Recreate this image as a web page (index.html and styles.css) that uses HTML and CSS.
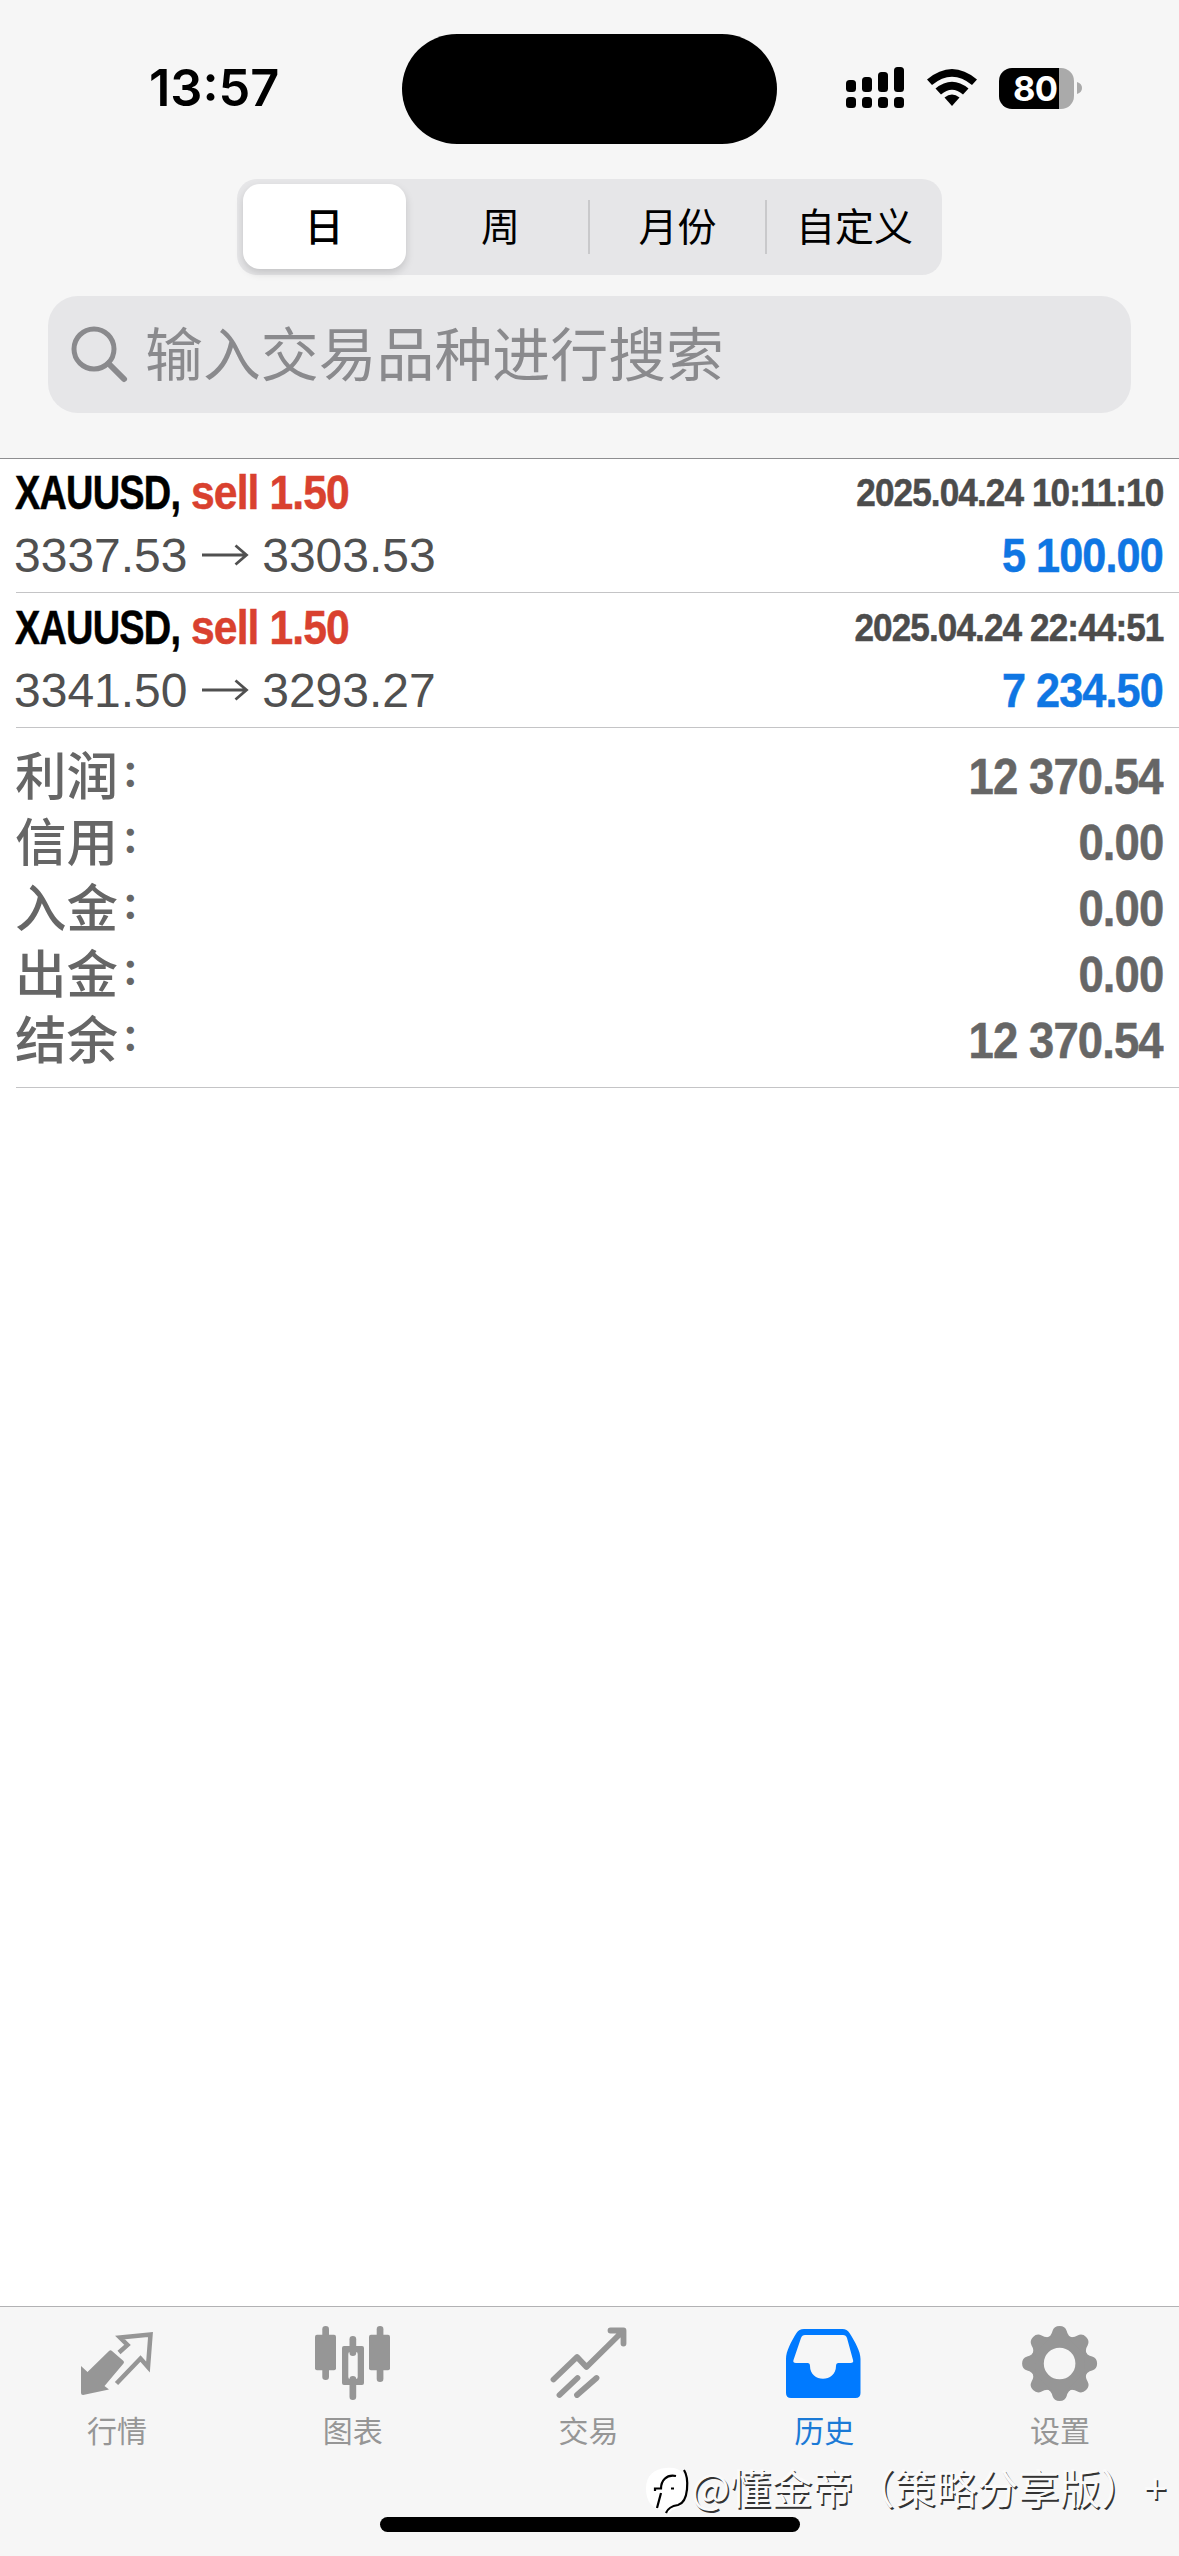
FILE: index.html
```html
<!DOCTYPE html>
<html lang="zh-CN">
<head>
<meta charset="utf-8">
<title>历史</title>
<link rel="stylesheet" href="styles.css">
</head>
<body>
<div class="screen">
  <header class="header">
    <div class="status">
      <div class="time">13:57</div>
      <div class="island"></div>
      <div class="indicators">
        <svg class="signal" width="58" height="42" viewBox="0 0 58 42">
          <rect x="0" y="13" width="10" height="12" rx="3.5"/><rect x="16" y="10" width="10" height="15" rx="3.5"/><rect x="32" y="5" width="10" height="20" rx="3.5"/><rect x="48" y="0" width="10" height="25" rx="3.5"/>
          <rect x="0" y="30" width="10" height="11" rx="3.5"/><rect x="16" y="30" width="10" height="11" rx="3.5"/><rect x="32" y="30" width="10" height="11" rx="3.5"/><rect x="48" y="30" width="10" height="11" rx="3.5"/>
        </svg>
        <svg class="wifi" width="50" height="42" viewBox="0 0 50 42">
          <path d="M0 12.5 Q25 -8.500 50 12.500 L45 18 Q25 1.500 5 18 Z"/>
          <path d="M8.500 21.500 Q25 8 41.500 21.500 L36 27.500 Q25 18 14 27.500 Z"/>
          <path d="M17.500 30.500 Q25 24.500 32.500 30.500 L25 39 Z"/>
        </svg>
        <div class="battery"><span class="level">80</span></div>
        <svg width="5" height="12" viewBox="0 0 5 12"><path d="M0 0 Q5 1.500 5 6 Q5 10.500 0 12Z" fill="#aaa"/></svg>
      </div>
    </div>
    <nav class="segments">
      <span class="segment active">日</span>
      <span class="segment">周</span>
      <span class="segment divided">月份</span>
      <span class="segment divided">自定义</span>
    </nav>
    <div class="search">
      <svg width="58" height="58" viewBox="0 0 58 58" fill="none" stroke="#8a8a8d" stroke-width="5"><ellipse cx="23" cy="23" rx="20" ry="20"/><path d="M37.500 37.500 L53 53" stroke-width="6" stroke-linecap="round"/></svg>
      <span class="placeholder">输入交易品种进行搜索</span>
    </div>
  </header>

  <main class="history">
    <section class="deal">
      <div class="line"><span><b class="symbol">XAUUSD,</b><b class="side">sell 1.50</b></span><b class="date">2025.04.24 10:11:10</b></div>
      <div class="line"><span class="prices">3337.53 <svg class="arrow" width="48" height="24" viewBox="0 0 48 24"><path d="M1 12H45M34.500 2.500L45.500 12L34.500 21.500"/></svg> 3303.53</span><b class="profit">5 100.00</b></div>
    </section>
    <section class="deal">
      <div class="line"><span><b class="symbol">XAUUSD,</b><b class="side">sell 1.50</b></span><b class="date">2025.04.24 22:44:51</b></div>
      <div class="line"><span class="prices">3341.50 <svg class="arrow" width="48" height="24" viewBox="0 0 48 24"><path d="M1 12H45M34.500 2.500L45.500 12L34.500 21.500"/></svg> 3293.27</span><b class="profit">7 234.50</b></div>
    </section>
    <section class="summary">
      <div class="total"><span class="label">利润</span><i>:</i><b>12 370.54</b></div>
      <div class="total"><span class="label">信用</span><i>:</i><b>0.00</b></div>
      <div class="total"><span class="label">入金</span><i>:</i><b>0.00</b></div>
      <div class="total"><span class="label">出金</span><i>:</i><b>0.00</b></div>
      <div class="total"><span class="label">结余</span><i>:</i><b>12 370.54</b></div>
    </section>
  </main>

  <footer class="tabbar">
    <div class="tab">
      <svg width="80" height="80" viewBox="0 0 80 80"><path fill="currentColor" d="M3 40 L9.500 46 L31 25 Q32.500 23.500 34 25 L45.500 35 Q46.500 36 45.500 37.500 L26.500 60 L31 63.500 L5 69 Q3 69 3 67Z"/><path fill="none" stroke="currentColor" stroke-width="4.500" d="M41 26.500 L49.500 19 L42 11.500 L72.500 8.500 L70 41 L62.500 32.500 L38.500 57.500"/></svg>
      <span>行情</span>
    </div>
    <div class="tab">
      <svg width="80" height="80" viewBox="0 0 80 80" fill="currentColor"><rect x="8.300" y="0" width="6.700" height="54" rx="3.300"/><rect x="1" y="8.700" width="21" height="35.600" rx="2"/><rect x="35.500" y="10" width="6.700" height="20" rx="3.300"/><rect x="35.500" y="50" width="6.700" height="24" rx="3.300"/><path fill-rule="evenodd" d="M30 20H48Q50 20 50 22V57Q50 59 48 59H30Q28 59 28 57V22Q28 20 30 20Z M36 26Q34.300 26 34.300 28V51Q34.300 53 36 53H42Q43.700 53 43.700 51V28Q43.700 26 42 26Z"/><rect x="62.700" y="0" width="6.700" height="56" rx="3.300"/><rect x="55" y="8.700" width="21" height="35.600" rx="2"/></svg>
      <span>图表</span>
    </div>
    <div class="tab">
      <svg width="80" height="80" viewBox="0 0 80 80" fill="none" stroke="currentColor" stroke-width="5.800" stroke-linecap="round" stroke-linejoin="round"><path d="M4.500 53.500L28 31L37.500 41L73 6M61.500 4.500H74.500V17.500"/><path d="M10.500 69L28.500 52M28 69L47.500 52"/></svg>
      <span>交易</span>
    </div>
    <div class="tab selected">
      <svg width="80" height="80" viewBox="0 0 80 80"><path fill="currentColor" fill-rule="evenodd" d="M19 3H57.500Q62 3 64.500 7C70 16 75.500 25 75.500 33V67Q75.500 72 70.500 72H6Q1 72 1 67V33C1 25 6 16 11.500 7Q14 3 19 3Z M20 9Q17 9 16 12L8.500 34Q7.500 37 11 37H22.500Q25 37 25 40C25 57 51 57 51 40Q51 37 53.500 37H65.500Q69 37 68 34L62 12Q61 9 58 9Z"/></svg>
      <span>历史</span>
    </div>
    <div class="tab">
      <svg width="80" height="80" viewBox="0 0 80 80" fill="currentColor"><defs><path id="tooth" d="M25 13 Q30.500 10 31.500 5 Q33 0 38.600 0 Q44.200 0 45.700 5 Q46.700 10 52.200 13Z"/></defs><circle cx="38.600" cy="37.500" r="22.300" fill="none" stroke="currentColor" stroke-width="13"/><use href="#tooth"/><use href="#tooth" transform="rotate(45 38.600 37.500)"/><use href="#tooth" transform="rotate(90 38.600 37.500)"/><use href="#tooth" transform="rotate(135 38.600 37.500)"/><use href="#tooth" transform="rotate(180 38.600 37.500)"/><use href="#tooth" transform="rotate(225 38.600 37.500)"/><use href="#tooth" transform="rotate(270 38.600 37.500)"/><use href="#tooth" transform="rotate(315 38.600 37.500)"/></svg>
      <span>设置</span>
    </div>
  </footer>
  <div class="home"></div>
  <div class="watermark">
    <svg width="45" height="58" viewBox="0 0 45 58"><path fill="#fff" d="M20 10C34 8 42 16 42 31C42 42 35 50 26 52L22 56L19 52C6 52 0 43 0 31C0 17 8 11 20 10Z"/><path fill="none" stroke="#000" stroke-width="2.200" d="M9 33V30.500H15C15 23 20 16 30 18M25 30.500H28M15 35L11 50M38 12C43 20 43 44 32 47C25 48 22 50 20 55"/></svg>
    <span class="handle">@懂金帝（策略分享版）</span><span class="plus">+</span>
  </div>
</div>
</body>
</html>
```
FILE: styles.css
```css
* { box-sizing: border-box; }
body {
  margin: 0;
  background: #fff;
  font-family: "Liberation Sans", "Noto Sans CJK SC", sans-serif;
}
.screen {
  position: relative;
  display: flex;
  flex-direction: column;
  width: 1179px;
  height: 2556px;
  overflow: hidden;
}
svg { display: block; flex: none; }

.header {
  height: 459px;
  background: #f6f6f6;
  border-bottom: 1px solid #8e8e90;
}
.status {
  display: flex;
  align-items: center;
  height: 179px;
  padding: 0 0 1px 149px;
}
.time {
  width: 253px;
  padding-bottom: 2px;
  font: 600 50.500px/60px Inter, sans-serif;
}
.island {
  width: 375px;
  height: 110px;
  border-radius: 55px;
  background: #000;
}
.indicators {
  display: flex;
  align-items: center;
  margin-left: 69px;
  padding-bottom: 2px;
}
.wifi { margin-left: 23px; }
.battery {
  width: 75px;
  height: 41px;
  margin: 0 3px 0 22px;
  border-radius: 13px;
  background: linear-gradient(90deg, #000 60px, #aaa 60px);
}
.level {
  display: block;
  padding-left: 14px;
  color: #fff;
  font: 700 34.500px/41px Inter, sans-serif;
  letter-spacing: -0.8px;
}
.segments {
  display: grid;
  grid-template-columns: 174px repeat(3, 177px);
  width: 705px;
  height: 96px;
  margin-left: 237px;
  border-radius: 20px;
  background: #e6e6e8;
}
.segment {
  display: flex;
  align-items: center;
  justify-content: center;
  padding: 0 0 6px 2px;
  font: 400 39px/60px "Noto Sans CJK SC", sans-serif;
}
.active {
  height: 85px;
  margin: 5px 5px 0 6px;
  padding: 0 1px 5px 0;
  border-radius: 17px;
  background: #fff;
  box-shadow: 0 4px 9px rgba(0, 0, 0, 0.15);
  font-weight: 500;
}
.divided {
  background: linear-gradient(#c9c9cb, #c9c9cb) no-repeat 0 21px / 2px 54px;
}
.search {
  display: flex;
  align-items: center;
  gap: 16px;
  width: 1083px;
  height: 117px;
  margin: 21px 0 0 48px;
  padding-left: 23px;
  border-radius: 30px;
  background: #e6e6e8;
}
.placeholder {
  padding-bottom: 8px;
  color: #8a8a8d;
  font: 400 57.900px/80px "Noto Sans CJK SC", sans-serif;
}

.history { flex: 1; }
.deal {
  height: 135px;
  margin-left: 16px;
  padding: 3px 16px 0 0;
  border-bottom: 1px solid #c4c4c6;
}
.deal:first-child { height: 134px; padding-top: 2px; }
.line {
  display: flex;
  justify-content: space-between;
  height: 63px;
  font-size: 48px;
  line-height: 63px;
  white-space: nowrap;
}
.line b { display: inline-block; }
.line b, .total b {
  letter-spacing: -1px;
  -webkit-text-stroke: 0.500px currentColor;
}
.symbol {
  width: 176px;
  margin-left: -1px;
  transform: scaleX(0.79);
  transform-origin: left;
}
.side {
  color: #d9412f;
  transform: scaleX(0.888);
  transform-origin: left;
}
.date {
  color: #4c4c4c;
  font-size: 38.500px;
  transform: scaleX(0.913);
  transform-origin: right;
}
.profit {
  color: #0f76e3;
  transform: scaleX(0.9);
  transform-origin: right;
}
.prices { margin-left: -2px; color: #505050; }
.arrow {
  display: inline-block;
  vertical-align: 5px;
  fill: none;
  stroke: #505050;
  stroke-width: 2.800;
}
.summary {
  height: 360px;
  margin-left: 16px;
  padding: 16px 16px 0 0;
  border-bottom: 1px solid #c4c4c6;
  color: #666;
}
.total {
  display: flex;
  height: 66px;
  line-height: 66px;
}
.label {
  height: 66px;
  margin: -4px 0 0 -1px;
  font: 500 51.500px/66px "Noto Sans CJK SC", sans-serif;
}
.total i {
  margin: -7px auto 0 5px;
  font: 600 46px/66px Inter, sans-serif;
}
.total b {
  font-size: 50.500px;
  transform: scaleX(0.9);
  transform-origin: right;
}

.tabbar {
  display: grid;
  grid-template-columns: repeat(5, 1fr);
  height: 250px;
  padding-top: 19px;
  border-top: 1px solid #b2b2b4;
  background: #f6f6f6;
}
.tab {
  display: flex;
  flex-direction: column;
  align-items: center;
  color: #969696;
  font: 400 30px/44px "Noto Sans CJK SC", sans-serif;
}
.tab span { margin: 1px 2px 0 0; }
.selected { color: #007aff; }
.selected span { color: #1b7ad6; }
.home {
  position: absolute;
  left: 380px;
  bottom: 24px;
  width: 420px;
  height: 15px;
  border-radius: 8px;
  background: #000;
}
.watermark {
  position: absolute;
  left: 646px;
  top: 2458px;
  display: flex;
  color: #fafafa;
  font: 400 41.200px/56px "Noto Sans CJK SC", sans-serif;
  text-shadow: 1.500px 1.500px 0 #333;
  white-space: nowrap;
}
.plus { margin-left: 2px; }
```
